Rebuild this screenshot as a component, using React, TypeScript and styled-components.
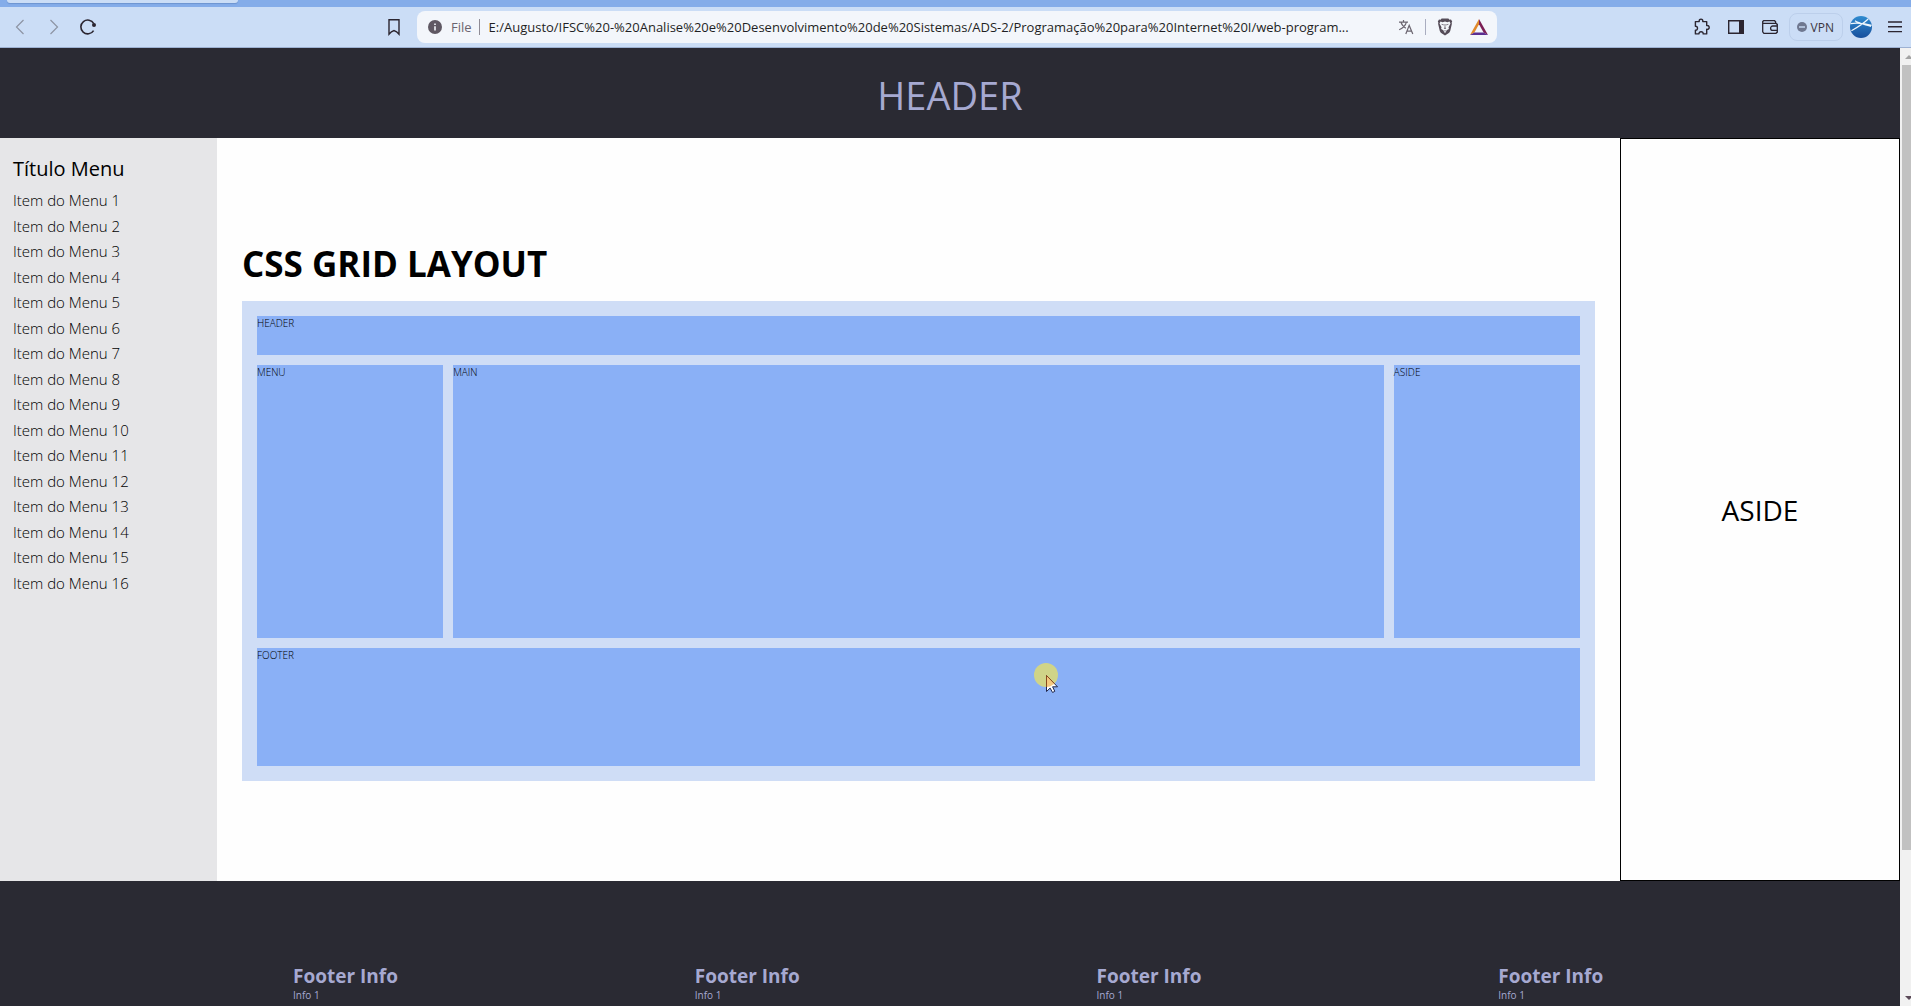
import React from "react";
import styled, { createGlobalStyle } from "styled-components";

const GlobalStyle = createGlobalStyle`
  *, *::before, *::after { box-sizing: border-box; }
  html, body { margin: 0; padding: 0; }
  body {
    font-family: "Open Sans", "Noto Sans", sans-serif;
    color: #000;
    overflow: hidden;
  }
  h1, h2, h3, p, ul { margin: 0; padding: 0; font-weight: 400; }
  ul { list-style: none; }
  button { font: inherit; color: inherit; background: none; border: 0; padding: 0; }
`;

/* ---------- browser window ---------- */

const Window = styled.div`
  display: flex;
  flex-direction: column;
  height: 100vh;
`;

const TabStrip = styled.div`
  flex: none;
  height: 7px;
  padding: 0 7px;
  background: #84ace9;
`;

const ActiveTab = styled.div`
  width: 231px;
  height: 3px;
  border-radius: 0 0 6px 6px;
  background: #cbddf6;
  box-shadow: 0 1px 1px #6d94d0;
`;

const Toolbar = styled.div`
  flex: none;
  display: grid;
  grid-template-columns: 382px minmax(0, 1fr) 414px;
  align-items: center;
  height: 41px;
  background: #cbddf6;
  border-bottom: 1px solid #9db1d2;
`;

const NavGroup = styled.div`
  display: flex;
  gap: 10px;
  padding-left: 8px;
`;

const IconButton = styled.button<{ $faded?: boolean }>`
  display: flex;
  align-items: center;
  justify-content: center;
  width: 24px;
  height: 24px;
  color: ${(p) => (p.$faded ? "#8d94a3" : "#2b2530")};
`;

const AddressGroup = styled.div`
  display: flex;
  align-items: center;
  gap: 11px;
`;

const AddressBar = styled.div`
  flex: 1;
  min-width: 0;
  display: flex;
  align-items: center;
  height: 32px;
  padding: 0 6px 0 11px;
  border-radius: 8px;
  background: #f3f6fb;
  font-size: 13px;
  color: #6b6570;
`;

const SchemeLabel = styled.label`
  margin-left: 9px;
  padding-right: 7px;
  line-height: 16px;
  border-right: 1px solid #8f8c96;
`;

const AddressInput = styled.input`
  flex: 1;
  min-width: 0;
  padding: 0 0 0 9px;
  border: 0;
  outline: 0;
  background: transparent;
  font: inherit;
  color: #1f1f24;
`;

const AddressActions = styled.div`
  display: flex;
  align-items: center;
  gap: 10px;
`;

const Divider = styled.span`
  width: 1px;
  height: 16px;
  margin: 0 -3px;
  background: #a9adc0;
`;

const ToolGroup = styled.div`
  display: flex;
  align-items: center;
  justify-content: flex-end;
  gap: 10px;
  padding-right: 4px;
`;

const VpnButton = styled.button`
  display: flex;
  align-items: center;
  gap: 4px;
  height: 28px;
  margin: 0 -4px 0 -3px;
  padding: 0 8px 0 7px;
  border: 1px solid #bccfeb;
  border-radius: 8px;
  font-size: 12px;
  color: #3b3640;
`;

const Viewport = styled.div`
  flex: 1;
  min-height: 0;
  display: grid;
  grid-template-columns: minmax(0, 1fr) 11px;
  overflow: hidden;
`;

const Scrollbar = styled.div`
  display: flex;
  flex-direction: column;
  padding-left: 2px;
  overflow: hidden;
  background: #f1f1f1;
`;

const ScrollButton = styled.button<{ $muted?: boolean }>`
  flex: none;
  display: flex;
  align-items: center;
  width: 13px;
  height: 17px;
  padding-left: 3px;
  color: ${(p) => (p.$muted ? "#a3a3a3" : "#5b4a58")};
`;

const ScrollTrack = styled.div`
  flex: 1;
`;

const ScrollThumb = styled.div`
  height: 85%;
  background: #c1c1c1;
`;

/* ---------- page ---------- */

const Page = styled.div`
  min-height: 0;
  overflow: hidden;
`;

const PageHeader = styled.header`
  display: flex;
  align-items: center;
  justify-content: center;
  height: 90px;
  padding-top: 4px;
  background: #2a2a33;
  color: #a6a9d1;
`;

const HeaderTitle = styled.h1`
  font-size: 38px;
  line-height: 52px;
`;

const Columns = styled.div`
  display: grid;
  grid-template-columns: 217px minmax(0, 1fr) 280px;
`;

const Menu = styled.nav`
  padding: 16px 13px;
  background: #e6e6e8;
`;

const MenuTitle = styled.h2`
  margin-bottom: 4px;
  font-size: 20px;
  line-height: 30px;
`;

const MenuItem = styled.li`
  font-size: 15px;
  font-weight: 300;
  line-height: 1.7;
`;

const Main = styled.main`
  padding: 102px 25px 100px;
  background: #fefefe;
`;

const MainTitle = styled.h2`
  margin-bottom: 13px;
  font-size: 35px;
  font-weight: 700;
  line-height: 48px;
`;

const Demo = styled.section`
  display: grid;
  grid-template-columns: 1fr 5fr 1fr;
  grid-template-rows: 39px 1fr 118px;
  gap: 10px;
  height: 480px;
  padding: 15px;
  background: #cfddf6;
`;

const Cell = styled.div<{ $wide?: boolean }>`
  grid-column: ${(p) => (p.$wide ? "1 / -1" : "auto")};
  background: #8ab0f6;
  font-size: 10px;
  font-weight: 300;
  line-height: 14px;
`;

const Aside = styled.aside`
  display: flex;
  align-items: center;
  justify-content: center;
  border: 1px solid #000;
  background: #fefefe;
  font-size: 28px;
`;

const PageFooter = styled.footer`
  display: grid;
  grid-template-columns: repeat(4, 1fr);
  min-height: 260px;
  padding: 81px 0 80px 293px;
  background: #2a2a33;
  color: #a6a9d1;
`;

const FooterTitle = styled.h3`
  font-size: 19px;
  font-weight: 700;
  line-height: 28px;
`;

const FooterText = styled.p`
  font-size: 10px;
  line-height: 10px;
`;

const Pointer = styled.div`
  position: fixed;
  left: 1034px;
  top: 663px;
  pointer-events: none;
`;

/* ---------- icons ---------- */

const Back = () => (
  <svg width="10" height="16" viewBox="0 0 10 16" fill="none" stroke="currentColor" strokeWidth="1.2">
    <path d="M8.5 1 1.5 8l7 7" />
  </svg>
);

const Forward = () => (
  <svg width="10" height="16" viewBox="0 0 10 16" fill="none" stroke="currentColor" strokeWidth="1.2">
    <path d="m1.5 1 7 7-7 7" />
  </svg>
);

const Reload = () => (
  <svg width="18" height="18" viewBox="0 0 18 18" fill="none" stroke="currentColor" strokeWidth="1.6">
    <path d="M14.6 12.6A6.9 6.9 0 1 1 14.8 5.6" />
    <circle cx="15" cy="7" r="2" fill="currentColor" stroke="none" />
  </svg>
);

const Bookmark = () => (
  <svg width="12" height="18" viewBox="0 0 12 18" fill="none" stroke="currentColor" strokeWidth="1.4">
    <path d="M1 1.8h10v14.4l-2.4-2.4L6 12.6l-2.6 1.2L1 16.2Z" />
  </svg>
);

const Info = () => (
  <svg width="14" height="14" viewBox="0 0 14 14">
    <circle cx="7" cy="7" r="7" fill="#5f5863" />
    <path d="M6.2 6.2h1.6v4.2H6.2zM6.2 3.4h1.6V5H6.2z" fill="#f3f6fb" />
  </svg>
);

const Translate = () => (
  <svg width="16" height="16" viewBox="0 0 16 16" fill="none" stroke="#6b6570" strokeWidth="1.2">
    <path d="M1 3.2h9M5.5 1v2.2M8.4 3.2C7.6 6.6 5 9 1.2 10.8M3 3.2c.6 2.4 2.4 4.6 4.8 6M7.8 15l3.4-8.6L14.8 15M9 12.2h4.6" />
  </svg>
);

const Lion = () => (
  <svg width="16" height="18" viewBox="0 0 16 18">
    <path d="M4.6.6h6.8l1 1.2 1.6-.2 1.2 1.8-.6 1.4.3 1-1.7 7.2-1 1.7L8 17.6l-4.2-2.9-1-1.7L1.1 5.8l.3-1L.8 3.4 2 1.6l1.6.2Z" fill="#554c58" />
    <path d="m3.5 3.6 2.2.6L8 3.4l2.3.8 2.2-.6 1 2-2 3.6.4 1.8-1.9 1L8 15.2 6 12l-1.9-1 .4-1.8-2-3.6Z" fill="#f3f6fb" />
    <path d="m3.8 5.8 3 .6-.4 1ZM12.2 5.8l-3 .6.4 1ZM7.6 6h.8l-.1 3.6 1 .6L8 11l-1.3-.8 1-.6ZM6 12.2l2 .5 2-.5-2 1.2Z" fill="#554c58" />
  </svg>
);

const Bat = () => (
  <svg width="18" height="16" viewBox="0 0 18 16">
    <path d="M9 0 0 16l4.4-2.6L9 5.2Z" fill="#e08a2c" />
    <path d="m9 0 9 16-4.4-2.6L9 5.2Z" fill="#7c1f55" />
    <path d="M0 16h18l-4.4-2.6H4.4Z" fill="#5b2e91" />
  </svg>
);

const Puzzle = () => (
  <svg width="18" height="18" viewBox="0 0 18 18" fill="none" stroke="currentColor" strokeWidth="1.4" strokeLinejoin="round">
    <path d="M2.4 3.6h3.8c-.2-1.6.6-2.5 1.8-2.5s2 .9 1.8 2.5h3.9v3.9c1.6-.2 2.5.6 2.5 1.9s-.9 2.1-2.5 1.9v4.6h-3.5c.1-1.3-.8-2.1-2.1-2.1s-2.2.8-2.1 2.1H2.4v-3.7c1.4.1 2.1-.8 2.1-2s-.7-2.1-2.1-2Z" />
  </svg>
);

const SidePanel = () => (
  <svg width="16" height="14" viewBox="0 0 16 14">
    <path d="M.7.7h14.6v12.6H.7Z" fill="none" stroke="currentColor" strokeWidth="1.4" />
    <path d="M11 0h5v14h-5z" fill="currentColor" />
  </svg>
);

const Wallet = () => (
  <svg width="16" height="14" viewBox="0 0 16 14" fill="none" stroke="currentColor" strokeWidth="1.3">
    <path d="M13.6 3.4V1.8L12.6.7H1.6L.7 1.6v10.2l1.2 1.5H14l1.3-1.2V4.4l-1.2-1H1.2M15.3 6H10.8a2.2 2.2 0 0 0 0 4.4h4.5" />
  </svg>
);

const VpnDot = () => (
  <svg width="10" height="10" viewBox="0 0 10 10">
    <circle cx="5" cy="5" r="5" fill="#6f7890" />
    <path d="M2 4.3h6v1.4H2z" fill="#cbddf6" />
  </svg>
);

const Avatar = () => (
  <svg width="22" height="22" viewBox="0 0 22 22">
    <defs>
      <linearGradient id="sea" x1="0" y1="0" x2="0" y2="1">
        <stop offset="0" stopColor="#2f8bd0" />
        <stop offset="1" stopColor="#174f9c" />
      </linearGradient>
    </defs>
    <circle cx="11" cy="11" r="11" fill="url(#sea)" />
    <path d="M1.4 14.8C7 11.6 13 8 18.2 3M.6 7.6c6-1 13-.4 21 1.8M5 4.8c3 2.2 6.4 2.8 16 5.6" fill="none" stroke="#eef6fc" strokeWidth="1.2" />
  </svg>
);

const Hamburger = () => (
  <svg width="14" height="12" viewBox="0 0 14 12" fill="none" stroke="currentColor" strokeWidth="1.4">
    <path d="M0 1h14M0 5.8h14M0 10.6h14" />
  </svg>
);

const Arrow = ({ down }: { down?: boolean }) => (
  <svg width="8" height="4" viewBox="0 0 8 4" fill="currentColor">
    <path d={down ? "M0 0h8L4 4Z" : "M0 4h8L4 0Z"} />
  </svg>
);

const PointerDrawing = () => (
  <svg width="26" height="30" viewBox="0 0 26 30">
    <circle cx="12" cy="12" r="12" fill="#d0d488" />
    <path d="M12.5 12.5v16l3.6-3.4 2.5 4.4 2.2-1.2-2.2-4.5h4.9Z" fill="#fff" stroke="#20264a" />
    <path d="M12.5 24V12.5l8 8.2-4.5 2.8Z" fill="#f5c97f" />
    <path d="M12.5 24V12.5l8 8.2" fill="none" stroke="#8a4a1e" />
  </svg>
);

/* ---------- content ---------- */

const menuItems = Array.from({ length: 16 }, (_, i) => `Item do Menu ${i + 1}`);
const footerBlocks = [1, 2, 3, 4];
const address =
  "E:/Augusto/IFSC%20-%20Analise%20e%20Desenvolvimento%20de%20Sistemas/ADS-2/Programação%20para%20Internet%20I/web-program...";

export default function App() {
  return (
    <>
      <GlobalStyle />
      <Window>
        <TabStrip>
          <ActiveTab />
        </TabStrip>
        <Toolbar>
          <NavGroup>
            <IconButton $faded aria-label="Back"><Back /></IconButton>
            <IconButton $faded aria-label="Forward"><Forward /></IconButton>
            <IconButton aria-label="Reload"><Reload /></IconButton>
          </NavGroup>
          <AddressGroup>
            <IconButton aria-label="Bookmark"><Bookmark /></IconButton>
            <AddressBar>
              <Info />
              <SchemeLabel htmlFor="address">File</SchemeLabel>
              <AddressInput id="address" type="text" defaultValue={address} spellCheck={false} />
              <AddressActions>
                <IconButton aria-label="Translate"><Translate /></IconButton>
                <Divider />
                <IconButton aria-label="Shields"><Lion /></IconButton>
                <IconButton aria-label="Rewards"><Bat /></IconButton>
              </AddressActions>
            </AddressBar>
          </AddressGroup>
          <ToolGroup>
            <IconButton aria-label="Extensions"><Puzzle /></IconButton>
            <IconButton aria-label="Side panel"><SidePanel /></IconButton>
            <IconButton aria-label="Wallet"><Wallet /></IconButton>
            <VpnButton><VpnDot />VPN</VpnButton>
            <IconButton aria-label="Profile"><Avatar /></IconButton>
            <IconButton aria-label="Menu"><Hamburger /></IconButton>
          </ToolGroup>
        </Toolbar>
        <Viewport>
          <Page>
            <PageHeader>
              <HeaderTitle>HEADER</HeaderTitle>
            </PageHeader>
            <Columns>
              <Menu>
                <MenuTitle>Título Menu</MenuTitle>
                <ul>
                  {menuItems.map((item) => (
                    <MenuItem key={item}>{item}</MenuItem>
                  ))}
                </ul>
              </Menu>
              <Main>
                <MainTitle>CSS GRID LAYOUT</MainTitle>
                <Demo>
                  <Cell $wide>HEADER</Cell>
                  <Cell>MENU</Cell>
                  <Cell>MAIN</Cell>
                  <Cell>ASIDE</Cell>
                  <Cell $wide>FOOTER</Cell>
                </Demo>
              </Main>
              <Aside>ASIDE</Aside>
            </Columns>
            <PageFooter>
              {footerBlocks.map((n) => (
                <div key={n}>
                  <FooterTitle>Footer Info</FooterTitle>
                  <FooterText>Info 1</FooterText>
                </div>
              ))}
            </PageFooter>
          </Page>
          <Scrollbar>
            <ScrollButton $muted aria-label="Scroll up"><Arrow /></ScrollButton>
            <ScrollTrack><ScrollThumb /></ScrollTrack>
            <ScrollButton aria-label="Scroll down"><Arrow down /></ScrollButton>
          </Scrollbar>
        </Viewport>
      </Window>
      <Pointer><PointerDrawing /></Pointer>
    </>
  );
}
